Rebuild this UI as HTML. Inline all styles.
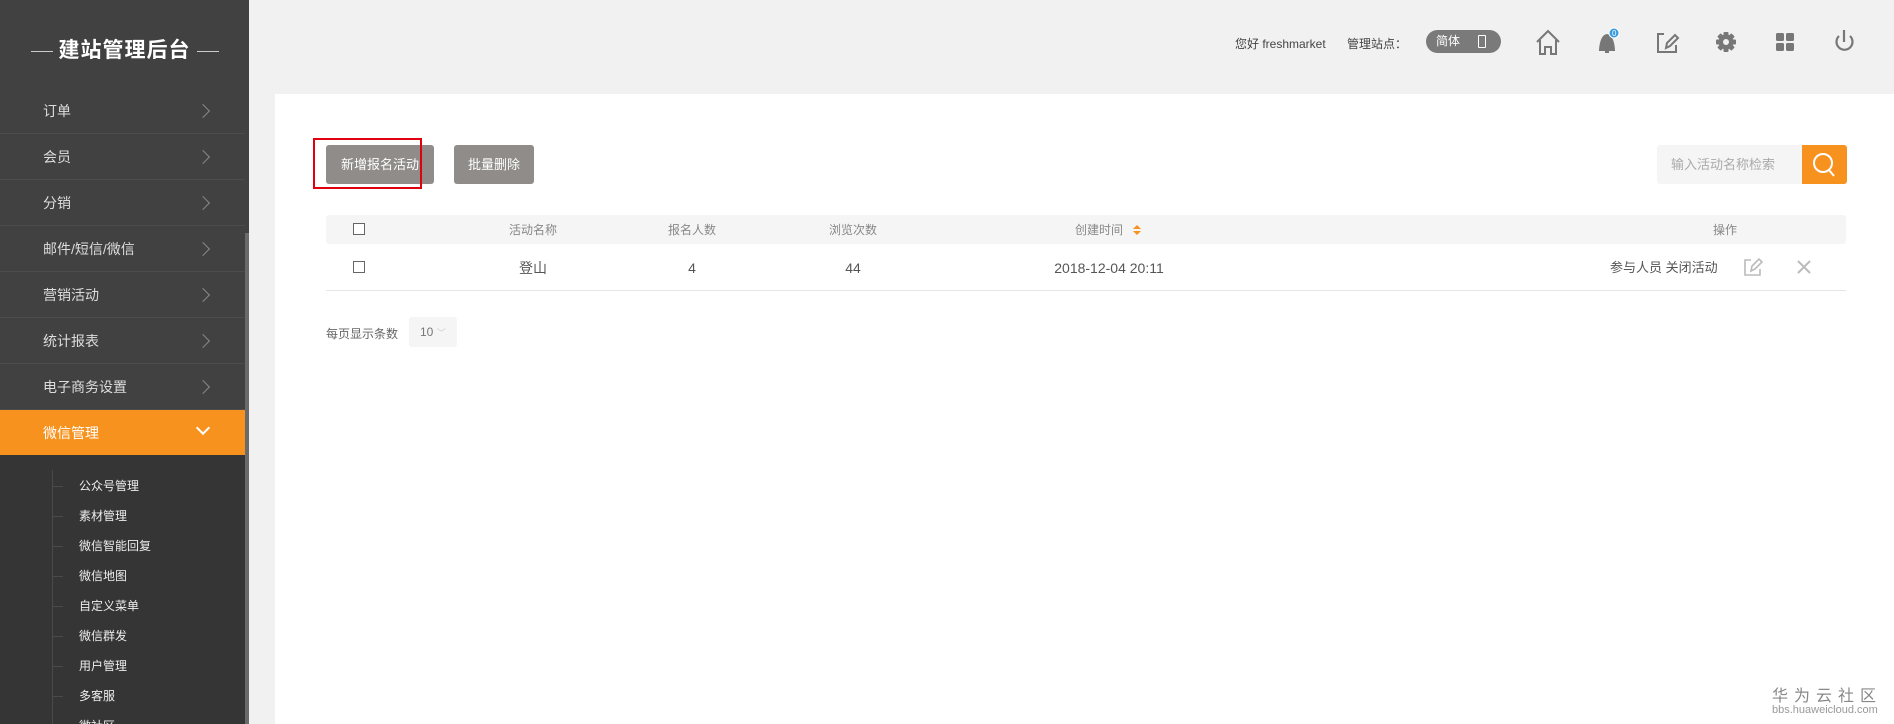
<!DOCTYPE html>
<html><head><meta charset="utf-8"><style>
*{margin:0;padding:0;box-sizing:border-box}
html,body{width:1894px;height:724px;overflow:hidden}
body{background:#f1f1f1;font-family:"Liberation Sans","Noto Sans CJK SC",sans-serif;position:relative}
.side{position:absolute;left:0;top:0;width:249px;height:724px;background:#414141}
.title{position:absolute;top:34px;left:0;width:249px;text-align:center;color:#fff;font-size:21px;font-weight:bold;letter-spacing:1px}
.title span{display:inline-block;width:22px;height:1px;background:#ccc;vertical-align:middle;margin:0 6px}
.menu{position:absolute;left:0;width:245px;height:46px;border-bottom:1px solid #4c4c4c;color:#ddd;font-size:14px;line-height:46px;padding-left:43px}
.chev{position:absolute;left:198px;top:18px;width:10px;height:10px;border-right:1.5px solid #888;border-top:1.5px solid #888;transform:rotate(45deg)}
.act{background:#f8921e;color:#fff;border:none;width:249px}
.act .chev{border-color:#fff;transform:rotate(135deg);top:13px;border-width:2px}
.sub{position:absolute;left:0;top:455px;width:245px;height:269px;background:#353535;overflow:hidden}
.vl{position:absolute;left:52px;top:15px;width:1px;height:260px;background:#4a4a4a}
.si{position:absolute;left:79px;color:#eee;font-size:12px}
.tick{position:absolute;left:52px;width:11px;height:1px;background:#4a4a4a}
.sb{position:absolute;left:245px;top:233px;width:4px;height:491px;background:#6a6a6a}
.t{position:absolute;font-size:12px;color:#444}
.panel{position:absolute;left:275px;top:94px;width:1619px;height:630px;background:#fff}
.btn{position:absolute;top:145px;height:39px;background:#8f8c89;color:#fff;font-size:13px;line-height:39px;text-align:center;border-radius:3px}
.th{position:absolute;left:326px;top:215px;width:1520px;height:29px;background:#f5f5f5;border-radius:3px}
.hc{position:absolute;top:222px;font-size:12px;line-height:16px;color:#888;transform:translateX(-50%);white-space:nowrap}
.rc{position:absolute;top:258px;font-size:14px;line-height:20px;color:#555;transform:translateX(-50%);white-space:nowrap}
.cb{position:absolute;left:353px;width:12px;height:12px;border:1px solid #666;background:#fff}
</style></head><body>
<div class="side">
<div class="title"><span></span>建站管理后台<span></span></div>
<div class="menu" style="top:88px">订单<i class="chev"></i></div>
<div class="menu" style="top:134px">会员<i class="chev"></i></div>
<div class="menu" style="top:180px">分销<i class="chev"></i></div>
<div class="menu" style="top:226px">邮件/短信/微信<i class="chev"></i></div>
<div class="menu" style="top:272px">营销活动<i class="chev"></i></div>
<div class="menu" style="top:318px">统计报表<i class="chev"></i></div>
<div class="menu" style="top:364px">电子商务设置<i class="chev"></i></div>
<div class="menu act" style="top:410px;height:45px">微信管理<i class="chev"></i></div>
<div class="sub"><div class="vl"></div>
<div class="tick" style="top:31px"></div><div class="si" style="top:22px">公众号管理</div>
<div class="tick" style="top:61px"></div><div class="si" style="top:52px">素材管理</div>
<div class="tick" style="top:91px"></div><div class="si" style="top:82px">微信智能回复</div>
<div class="tick" style="top:121px"></div><div class="si" style="top:112px">微信地图</div>
<div class="tick" style="top:151px"></div><div class="si" style="top:142px">自定义菜单</div>
<div class="tick" style="top:181px"></div><div class="si" style="top:172px">微信群发</div>
<div class="tick" style="top:211px"></div><div class="si" style="top:202px">用户管理</div>
<div class="tick" style="top:241px"></div><div class="si" style="top:232px">多客服</div>
<div class="si" style="top:262px">微社区</div>
</div>
<div class="sb"></div>
</div>
<div class="t" style="left:1235px;top:35px">您好 freshmarket</div>
<div class="t" style="left:1347px;top:35px">管理站点：</div>
<div style="position:absolute;left:1426px;top:30px;width:75px;height:23px;background:#7a7a7a;border-radius:12px;color:#fff;font-size:12px;line-height:23px;padding-left:10px">简体<span style="position:absolute;left:52px;top:5px;width:8px;height:13px;border:1.5px solid #fff;border-radius:1px"></span></div>
<svg style="position:absolute;left:0;top:0" width="1894" height="94" fill="none" stroke="#777" stroke-width="2">
<path d="M1537 42 L1548 31 L1559 42 M1540 40 V54 H1545 V47 H1551 V54 H1556 V40"/>
<path d="M1600 50 Q1601 36 1607 35 Q1613 36 1614 50 Z M1605 52 h4" fill="#777"/><circle cx="1614" cy="33" r="5" fill="#3a9be0" stroke="#fff" stroke-width="1"/><text x="1612" y="36" font-size="8" fill="#fff" stroke="none" font-family="Liberation Sans">0</text>
<path d="M1664 34 H1658 V52 H1676 V45 M1666 48 L1667 43 L1675 35 L1678 38 L1670 46 Z"/>
<g fill="#777" stroke="none"><circle cx="1726" cy="42" r="7.5"/>
<rect x="1723.5" y="32" width="5" height="20" rx="1"/><rect x="1723.5" y="32" width="5" height="20" rx="1" transform="rotate(45 1726 42)"/><rect x="1723.5" y="32" width="5" height="20" rx="1" transform="rotate(90 1726 42)"/><rect x="1723.5" y="32" width="5" height="20" rx="1" transform="rotate(135 1726 42)"/>
<circle cx="1726" cy="42" r="3" fill="#f1f1f1"/></g>
<g fill="#777" stroke="none"><rect x="1776" y="33" width="8" height="8" rx="1.5"/><rect x="1786" y="33" width="8" height="8" rx="1.5"/><rect x="1776" y="43" width="8" height="8" rx="1.5"/><rect x="1786" y="43" width="8" height="8" rx="1.5"/></g>
<path d="M1839 36 A8 8 0 1 0 1850 36 M1844 30 V42" stroke-width="2.2"/>
</svg>
<div class="panel"></div>
<div class="btn" style="left:326px;width:108px">新增报名活动</div>
<div style="position:absolute;left:313px;top:138px;width:109px;height:51px;border:2px solid #e0000f"></div>
<div class="btn" style="left:454px;width:80px">批量删除</div>
<div style="position:absolute;left:1657px;top:145px;width:145px;height:39px;background:#f5f5f5;border-radius:3px 0 0 3px;color:#aaa;font-size:13px;line-height:39px;padding-left:14px">输入活动名称检索</div>
<div style="position:absolute;left:1802px;top:145px;width:45px;height:39px;background:#f8921e;border-radius:0 3px 3px 0"><svg width="45" height="39" fill="none" stroke="#fff" stroke-width="2"><circle cx="21" cy="18" r="9"/><path d="M27 25 L32 31"/></svg></div>
<div class="th"></div>
<div class="cb" style="top:223px"></div>
<div class="hc" style="left:533px">活动名称</div>
<div class="hc" style="left:692px">报名人数</div>
<div class="hc" style="left:853px">浏览次数</div>
<div class="hc" style="left:1099px">创建时间</div>
<svg style="position:absolute;left:1132px;top:224px" width="10" height="12"><path d="M1 5 L5 1 L9 5Z M1 7 L5 11 L9 7Z" fill="#f8921e"/></svg>
<div class="hc" style="left:1725px">操作</div>
<div class="cb" style="top:261px"></div>
<div class="rc" style="left:533px">登山</div>
<div class="rc" style="left:692px">4</div>
<div class="rc" style="left:853px">44</div>
<div class="rc" style="left:1109px">2018-12-04 20:11</div>
<div style="position:absolute;left:1610px;top:258px;font-size:13px;line-height:20px;color:#555;white-space:nowrap">参与人员 关闭活动</div>
<svg style="position:absolute;left:1743px;top:257px" width="20" height="20" fill="none" stroke="#bbb" stroke-width="1.6"><path d="M8 3 H2 V18 H17 V12 M8 14 L9 9 L16 2 L19 5 L12 12 Z"/></svg>
<svg style="position:absolute;left:1796px;top:259px" width="16" height="16" stroke="#bbb" stroke-width="2"><path d="M2 2 L14 14 M14 2 L2 14"/></svg>
<div style="position:absolute;left:326px;top:290px;width:1520px;height:1px;background:#e6e6e6"></div>
<div style="position:absolute;left:326px;top:325px;font-size:12px;color:#666">每页显示条数</div>
<div style="position:absolute;left:409px;top:317px;width:48px;height:30px;background:#f5f5f5;border-radius:3px;font-size:12px;color:#777;line-height:30px;padding-left:11px">10 <span style="color:#ccc;font-size:9px">﹀</span></div>
<div style="position:absolute;left:1772px;top:682px;font-size:16px;color:#888;letter-spacing:6px;white-space:nowrap">华为云社区</div>
<div style="position:absolute;left:1772px;top:704px;font-size:11px;color:#999;white-space:nowrap">bbs.huaweicloud.com</div>
</body></html>
